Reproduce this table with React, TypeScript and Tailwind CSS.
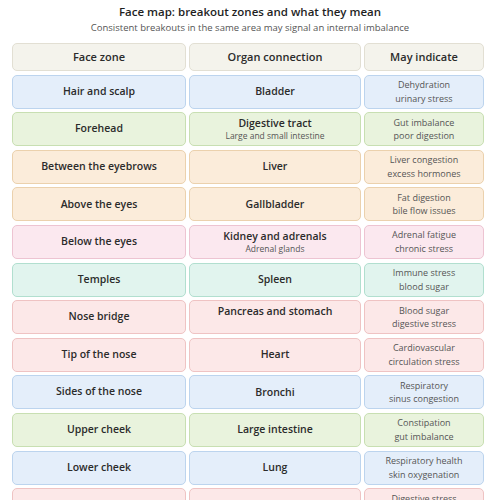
import React from "react";

type Tone = "blue" | "green" | "orange" | "pink" | "teal" | "rose";

const tones: Record<Tone, string> = {
  blue: "bg-[#e4eefa] border-[#bcd4ee]",
  green: "bg-[#e9f3dd] border-[#c8dfb2]",
  orange: "bg-[#fbecda] border-[#ebd1ad]",
  pink: "bg-[#fbe8ef] border-[#edc4d2]",
  teal: "bg-[#e1f4ee] border-[#b1dfcf]",
  rose: "bg-[#fce8e8] border-[#efc3c3]",
};

const rows: {
  zone: string;
  organ: string;
  sub?: string;
  note: [string, string];
  tone: Tone;
}[] = [
  { zone: "Hair and scalp", organ: "Bladder", note: ["Dehydration", "urinary stress"], tone: "blue" },
  { zone: "Forehead", organ: "Digestive tract", sub: "Large and small intestine", note: ["Gut imbalance", "poor digestion"], tone: "green" },
  { zone: "Between the eyebrows", organ: "Liver", note: ["Liver congestion", "excess hormones"], tone: "orange" },
  { zone: "Above the eyes", organ: "Gallbladder", note: ["Fat digestion", "bile flow issues"], tone: "orange" },
  { zone: "Below the eyes", organ: "Kidney and adrenals", sub: "Adrenal glands", note: ["Adrenal fatigue", "chronic stress"], tone: "pink" },
  { zone: "Temples", organ: "Spleen", note: ["Immune stress", "blood sugar"], tone: "teal" },
  { zone: "Nose bridge", organ: "Pancreas and stomach", sub: "", note: ["Blood sugar", "digestive stress"], tone: "rose" },
  { zone: "Tip of the nose", organ: "Heart", note: ["Cardiovascular", "circulation stress"], tone: "rose" },
  { zone: "Sides of the nose", organ: "Bronchi", note: ["Respiratory", "sinus congestion"], tone: "blue" },
  { zone: "Upper cheek", organ: "Large intestine", note: ["Constipation", "gut imbalance"], tone: "green" },
  { zone: "Lower cheek", organ: "Lung", note: ["Respiratory health", "skin oxygenation"], tone: "blue" },
  { zone: "Chin", organ: "Stomach", note: ["Digestive stress", "hormonal shifts"], tone: "rose" },
];

function Cell({ tone, children }: { tone: string; children: React.ReactNode }) {
  return (
    <div className={`flex flex-col items-center justify-center rounded-[5px] border text-center ${tone}`}>
      {children}
    </div>
  );
}

export default function App() {
  return (
    <div
      className="h-[500px] w-[500px] overflow-hidden bg-white text-[#2b2b2b]"
      style={{ fontFamily: '"Open Sans", "Noto Sans", sans-serif' }}
    >
      <div className="pt-[4px] text-center">
        <h1 className="text-[11.5px] font-semibold leading-[16px] text-[#1f1f1f]">
          Face map: breakout zones and what they mean
        </h1>
        <p className="mt-[1px] text-[9.5px] leading-[14px] text-[#555]">
          Consistent breakouts in the same area may signal an internal imbalance
        </p>
      </div>

      <div className="mx-[12px] mt-[8px] grid grid-cols-[174px_172px_120px] gap-x-[3px] gap-y-[3.6px]">
        <div className="col-span-3 grid h-[28px] grid-cols-subgrid">
          {["Face zone", "Organ connection", "May indicate"].map((h) => (
            <Cell key={h} tone="bg-[#f4f3ec] border-[#e2dfd3]">
              <span className="text-[11px] font-semibold text-[#2b2b2b]">{h}</span>
            </Cell>
          ))}
        </div>

        {rows.map((r) => (
          <div key={r.zone} className="col-span-3 grid h-[34px] grid-cols-subgrid">
            <Cell tone={tones[r.tone]}>
              <span className="text-[10.5px] font-semibold text-[#2b2b2b]">{r.zone}</span>
            </Cell>
            <Cell tone={tones[r.tone]}>
              <span className="text-[10.5px] font-semibold leading-[13px] text-[#2b2b2b]">{r.organ}</span>
              {r.sub !== undefined && (
                <span className="h-[11px] text-[8.5px] leading-[11px] text-[#555]">{r.sub}</span>
              )}
            </Cell>
            <Cell tone={tones[r.tone]}>
              <span className="text-[9px] leading-[13.5px] text-[#555]">{r.note[0]}</span>
              <span className="text-[9px] leading-[13.5px] text-[#555]">{r.note[1]}</span>
            </Cell>
          </div>
        ))}
      </div>
    </div>
  );
}
